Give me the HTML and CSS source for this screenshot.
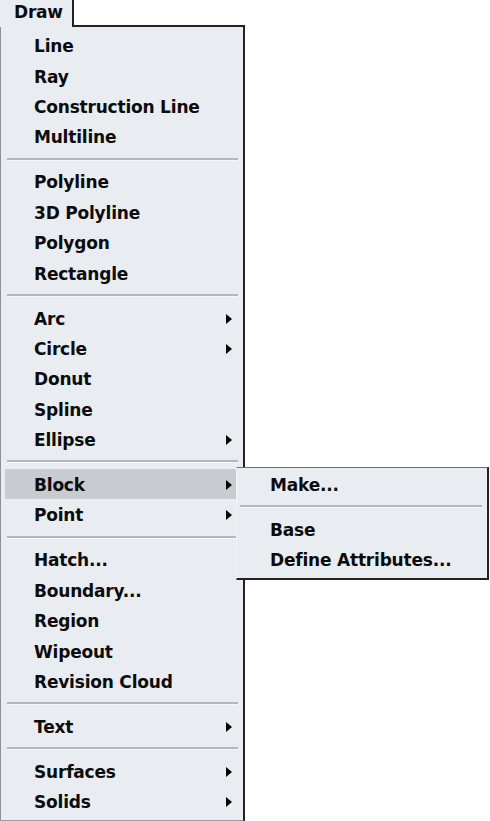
FILE: index.html
```html
<!DOCTYPE html>
<html>
<head>
    <meta charset="utf-8">
    <meta name="viewport" content="width=device-width, initial-scale=1">
    <title>Draw</title>
    <link rel="stylesheet" href="styles.css">
</head>

<body>
    <div class="tab">Draw</div>

    <div class="menu">
        <div class="item">Line</div>
        <div class="item">Ray</div>
        <div class="item">Construction Line</div>
        <div class="item">Multiline</div>
        <div class="sep"></div>
        <div class="item">Polyline</div>
        <div class="item">3D Polyline</div>
        <div class="item">Polygon</div>
        <div class="item">Rectangle</div>
        <div class="sep"></div>
        <div class="item">Arc <span class="arrow"></span></div>
        <div class="item">Circle <span class="arrow"></span></div>
        <div class="item">Donut</div>
        <div class="item">Spline</div>
        <div class="item">Ellipse <span class="arrow"></span></div>
        <div class="sep"></div>
        <div class="item active">Block <span class="arrow"></span>
            <!-- open submenu -->
            <div class="submenu">
                <div class="item">Make...</div>
                <div class="sep"></div>
                <div class="item">Base</div>
                <div class="item">Define Attributes...</div>
            </div>
        </div>
        <div class="item">Point <span class="arrow"></span></div>
        <div class="sep"></div>
        <div class="item">Hatch...</div>
        <div class="item">Boundary...</div>
        <div class="item">Region</div>
        <div class="item">Wipeout</div>
        <div class="item">Revision Cloud</div>
        <div class="sep"></div>
        <div class="item">Text <span class="arrow"></span></div>
        <div class="sep"></div>
        <div class="item">Surfaces <span class="arrow"></span></div>
        <div class="item">Solids <span class="arrow"></span></div>
    </div>
</body>
</html>
```

FILE: styles.css
```css
body{
    margin: 0;
    padding: 0;
    background-color: #fff;
    font-family: "DejaVu Sans", Verdana, sans-serif;
    font-weight: bold;
    font-size: 17px;
    letter-spacing: -0.2px;
    color: #0c0c0c;
    overflow: hidden;}

.tab{
    position: relative;
    z-index: 2;
    box-sizing: border-box;
    width: 74px;
    height: 27px;
    margin-bottom: -2px;
    padding: 2px 0 0 14px;
    background-color: #e9ecf0;
    border-right: 2px solid #222;}

.menu{
    box-sizing: border-box;
    width: 245px;
    padding: 3px 3px 3px 4px;
    background-color: #e9ecf0;
    border-top: 2px solid #222;
    border-right: 2px solid #222;
    border-left: 1px solid #8d9094;
    border-bottom: 2px solid #9a9da1;}

.item{
    position: relative;
    display: flex;
    align-items: center;
    justify-content: space-between;
    box-sizing: border-box;
    height: 30.4px;
    padding: 2px 8px 0 29px;
    white-space: nowrap;}

.item.active{
    background-color: #c8cbd0;}

.arrow{
    width: 0;
    height: 0;
    border-left: 6px solid #000;
    border-top: 5px solid transparent;
    border-bottom: 5px solid transparent;}

.sep{
    height: 14.6px;
    margin: 0 2px;
    background: linear-gradient(#e9ecf0 6px, #b4b7bb 6px, #b4b7bb 8px, #f7f8fa 8px, #f7f8fa 9px, #e9ecf0 9px);}

/* submenu sits over the right side of the main menu */
.submenu{
    position: absolute;
    top: -2px;
    left: 231px;
    z-index: 3;
    box-sizing: border-box;
    width: 253px;
    padding: 1px 3px 3px 1px;
    background-color: #e9ecf0;
    border-top: 1px solid #6c6f73;
    border-right: 2px solid #222;
    border-bottom: 2px solid #222;
    border-left: 1px solid #f4f5f7;}

.submenu .item{
    padding-left: 32px;}
```
